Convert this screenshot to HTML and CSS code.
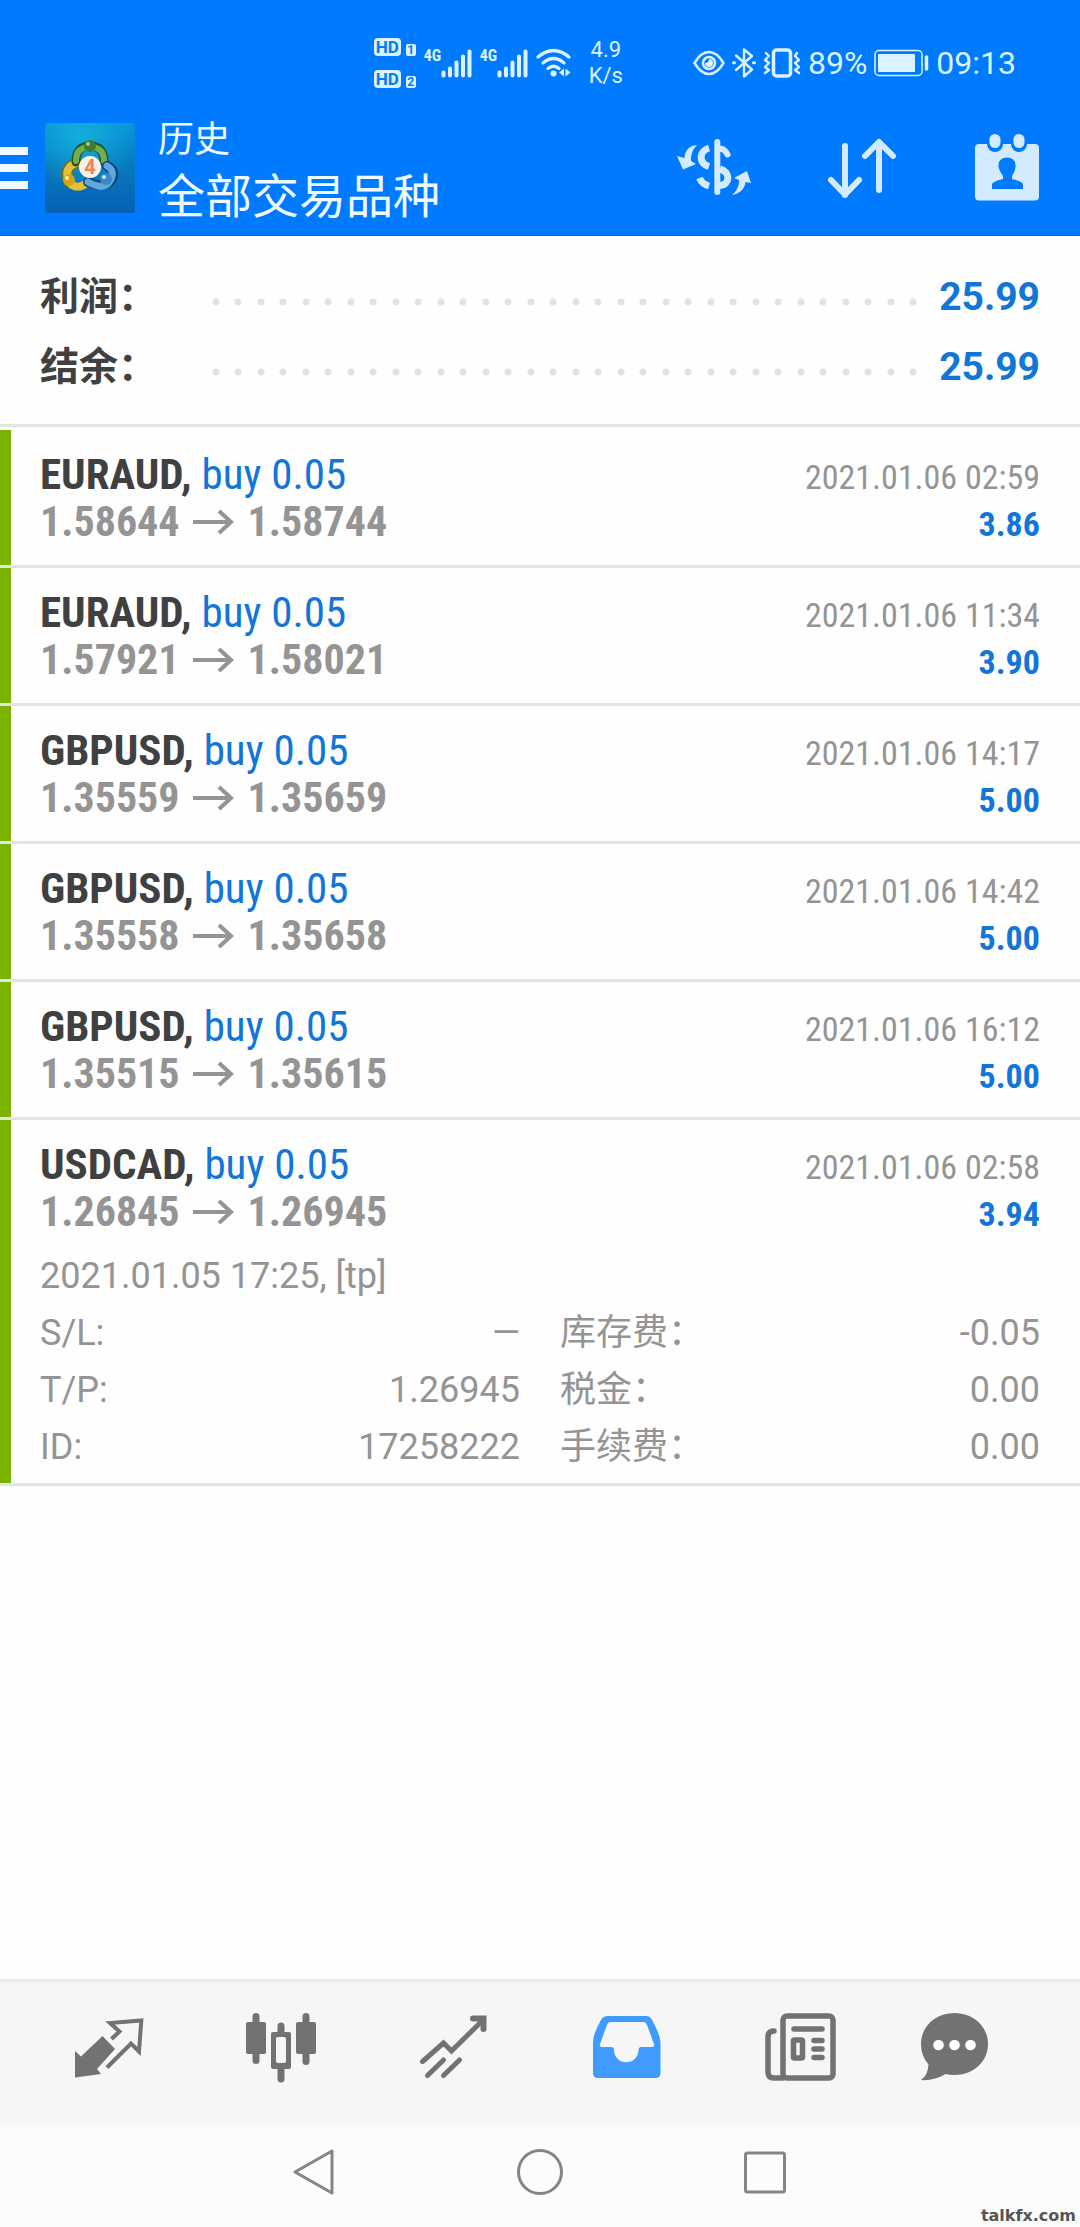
FILE: index.html
```html
<!DOCTYPE html>
<html lang="zh-CN">
<head>
<meta charset="utf-8">
<meta name="viewport" content="width=device-width, initial-scale=1">
<title>历史 - 全部交易品种</title>
<link rel="stylesheet" href="styles.css">
</head>
<body>
<header class="top">
  <div class="status">
    <div class="status-group status-network">
      <div class="hd-list">
        <div class="hd"><span class="hd-badge">HD</span><span class="hd-sim">1</span></div>
        <div class="hd"><span class="hd-badge">HD</span><span class="hd-sim">2</span></div>
      </div>
      <div class="signal">
        <span class="signal-type">4G</span>
        <svg width="31" height="29" viewBox="0 0 31 29" aria-hidden="true"><path d="M2.5 26.5v-3M9 26.500v-7M15.500 26.500v-13M22 26.500v-19M28.500 26.500v-24" stroke="currentColor" stroke-width="4" stroke-linecap="round"/></svg>
      </div>
      <div class="signal">
        <span class="signal-type">4G</span>
        <svg width="31" height="29" viewBox="0 0 31 29" aria-hidden="true"><path d="M2.5 26.5v-3M9 26.500v-7M15.500 26.500v-13M22 26.500v-19M28.500 26.500v-24" stroke="currentColor" stroke-width="4" stroke-linecap="round"/></svg>
      </div>
      <svg class="wifi" width="35" height="30" viewBox="0 0 35 30" fill="none" stroke="currentColor" stroke-width="3.200" stroke-linecap="round" aria-hidden="true"><path d="M2 9Q17.500-4 33 9M7 15Q17.500 6 28 15M12 20.500Q17.500 16 23 20.500"/><circle cx="17.500" cy="25.500" r="3" fill="currentColor" stroke="none"/><path d="M28 20.500v8l-5-4zM29.500 20.500v8l5-4z" fill="currentColor" stroke="none"/></svg>
      <div class="speed"><span>4.9</span><span>K/s</span></div>
    </div>
    <div class="status-group status-device">
      <svg width="32" height="26" viewBox="0 0 32 26" fill="none" stroke="currentColor" stroke-width="2.500" aria-hidden="true"><path d="M1.500 13Q8 2 16 2t14.500 11Q24 24 16 24T1.500 13z"/><circle cx="16" cy="13" r="6"/><path d="M16 9a4 4 0 1 1-4 4q4 0 4-4z" fill="currentColor" stroke="none"/></svg>
      <svg width="24" height="30" viewBox="0 0 24 30" fill="none" stroke="currentColor" stroke-width="2.400" stroke-linejoin="round" stroke-linecap="round" aria-hidden="true"><path d="M4 7.500 20 21.500 12 28.500V1.500L20 8 4 22"/><path d="M1.500 14.800h1M21.500 14.800h1" stroke-width="3"/></svg>
      <svg width="38" height="30" viewBox="0 0 38 30" fill="none" stroke="currentColor" stroke-linecap="round" stroke-linejoin="round" aria-hidden="true"><rect x="10.500" y="2" width="17" height="26" rx="3" stroke-width="3.500"/><path d="M3 5l3 3-4 4 4 3-4 4 4 3-4 3M34 5l-2 3 4 4-4 3 4 4-4 3 4 3" stroke-width="2.400"/></svg>
      <span class="status-text">89%</span>
      <svg width="55" height="28" viewBox="0 0 55 28" fill="none" aria-hidden="true"><rect x="1" y="1.500" width="47" height="25" rx="4" stroke="currentColor" stroke-width="1.500"/><rect x="4" y="5" width="37" height="18" rx="1" fill="currentColor"/><path d="M52.500 8v12" stroke="currentColor" stroke-width="3.500" stroke-linecap="round"/></svg>
      <span class="status-text">09:13</span>
    </div>
  </div>
  <div class="appbar">
    <button class="menu" type="button" aria-label="菜单"><i></i><i></i><i></i></button>
    <svg class="logo" width="90" height="90" viewBox="0 0 90 90" aria-hidden="true">
      <defs>
        <linearGradient id="sky" x1="0" y1="0" x2="0" y2="1"><stop offset="0" stop-color="#0a94dc"/><stop offset=".5" stop-color="#0878bd"/><stop offset="1" stop-color="#0560b4"/></linearGradient>
        <radialGradient id="shine" cx=".4" cy=".15" r=".6"><stop offset="0" stop-color="#16b6dc" stop-opacity=".8"/><stop offset="1" stop-color="#16b6dc" stop-opacity="0"/></radialGradient>
      </defs>
      <rect width="90" height="90" rx="3" fill="url(#sky)"/>
      <rect width="90" height="90" rx="3" fill="url(#shine)"/>
      <g fill="none" stroke-linecap="round">
        <path d="M24 59Q18 44 32 40" stroke="#7a6c18" stroke-width="11"/>
        <path d="M24 59Q18 44 32 40M27 62Q34 66 40 61" stroke="#e5bf35" stroke-width="8"/>
        <path d="M31 39Q31 23 45 23T59 39" stroke="#1f5529" stroke-width="9"/>
        <path d="M31 38Q31 24 45 24T59 38" stroke="#73ad52" stroke-width="6"/>
        <path d="M62 43Q72 48 66 57T43 59" stroke="#123f77" stroke-width="10"/>
        <path d="M62 43Q71 48 65 58T43 59" stroke="#5fa8dc" stroke-width="7"/>
      </g>
      <circle cx="45" cy="23" r="6" fill="#3c7c33"/><circle cx="43" cy="21" r="2" fill="#a2d27d"/>
      <circle cx="24" cy="57" r="6" fill="#d4a51c"/><circle cx="22" cy="55" r="2" fill="#fff0a0"/>
      <circle cx="61" cy="56" r="6" fill="#3b87cb"/><circle cx="59" cy="54" r="2" fill="#c4e8ff"/>
      <circle cx="45" cy="44" r="11" fill="#f6f1ea"/>
      <text x="45" y="51" text-anchor="middle" class="logo-digit">4</text>
    </svg>
    <div class="titles">
      <h1 class="title">历史</h1>
      <p class="subtitle">全部交易品种</p>
    </div>
    <div class="actions">
      <button type="button" aria-label="货币">
        <svg width="74" height="60" viewBox="0 0 74 60" fill="none" stroke="currentColor" stroke-width="6" aria-hidden="true"><path d="M40.300 4v50M43 10.500Q48 11 50.500 16.500" stroke-linecap="round"/><path d="M32 10C22 13 21 25 32 28.500M43 31C54 34 53 47 43 47.500" stroke-width="7"/><path d="M22.500 40Q25 46 32 48" stroke-width="7"/><path d="M20 7C12 8 8 12 7.500 20L0 18l6 13.500L19 26l-5-3c0-6 1-11 6-16zM55 57c7-1 13-6 13.500-13l5.500 1-4-12-13 7 5 2c0 6-2 11-7 15z" fill="currentColor" stroke="none"/></svg>
      </button>
      <button type="button" aria-label="排序">
        <svg width="68" height="62" viewBox="0 0 68 62" fill="none" stroke="currentColor" stroke-width="6" stroke-linecap="round" stroke-linejoin="round" aria-hidden="true"><path d="M16 9v49M2 43l14 14.500L30 43M50 53V5M36 19 50 5l14 14"/></svg>
      </button>
      <button type="button" aria-label="日期">
        <svg width="64" height="68" viewBox="0 0 64 68" aria-hidden="true"><path fill="currentColor" fill-rule="evenodd" d="M4 10h8a8 8 0 0 0 16 0h8a8 8 0 0 0 16 0h8a4 4 0 0 1 4 4v48.500a4 4 0 0 1-4 4H4a4 4 0 0 1-4-4V14a4 4 0 0 1 4-4zM17 55h31v-5q-2-3-11-5v-3q4-6 3.500-11Q40 23.500 32 23.500T23.500 31q0 5 4.500 11v3q-9 2-11 5z"/><rect x="14.500" y="0" width="11" height="14" rx="5.500" fill="currentColor"/><rect x="38.500" y="0" width="11" height="14" rx="5.500" fill="currentColor"/></svg>
      </button>
    </div>
  </div>
</header>

<main class="content">
  <dl class="summary">
    <div class="summary-row"><dt>利润：</dt><dd>25.99</dd></div>
    <div class="summary-row"><dt>结余：</dt><dd>25.99</dd></div>
  </dl>

  <ul class="deals">
    <li class="deal">
      <div class="deal-line"><h2 class="symbol">EURAUD, <span class="side">buy 0.05</span></h2><time class="time">2021.01.06 02:59</time></div>
      <div class="deal-line"><p class="prices"><span>1.58644</span><svg class="arrow" viewBox="0 0 42 24" aria-hidden="true"><path d="M0 12h38M26 1l12 11-12 11"/></svg><span>1.58744</span></p><strong class="profit">3.86</strong></div>
    </li>
    <li class="deal">
      <div class="deal-line"><h2 class="symbol">EURAUD, <span class="side">buy 0.05</span></h2><time class="time">2021.01.06 11:34</time></div>
      <div class="deal-line"><p class="prices"><span>1.57921</span><svg class="arrow" viewBox="0 0 42 24" aria-hidden="true"><path d="M0 12h38M26 1l12 11-12 11"/></svg><span>1.58021</span></p><strong class="profit">3.90</strong></div>
    </li>
    <li class="deal">
      <div class="deal-line"><h2 class="symbol">GBPUSD, <span class="side">buy 0.05</span></h2><time class="time">2021.01.06 14:17</time></div>
      <div class="deal-line"><p class="prices"><span>1.35559</span><svg class="arrow" viewBox="0 0 42 24" aria-hidden="true"><path d="M0 12h38M26 1l12 11-12 11"/></svg><span>1.35659</span></p><strong class="profit">5.00</strong></div>
    </li>
    <li class="deal">
      <div class="deal-line"><h2 class="symbol">GBPUSD, <span class="side">buy 0.05</span></h2><time class="time">2021.01.06 14:42</time></div>
      <div class="deal-line"><p class="prices"><span>1.35558</span><svg class="arrow" viewBox="0 0 42 24" aria-hidden="true"><path d="M0 12h38M26 1l12 11-12 11"/></svg><span>1.35658</span></p><strong class="profit">5.00</strong></div>
    </li>
    <li class="deal">
      <div class="deal-line"><h2 class="symbol">GBPUSD, <span class="side">buy 0.05</span></h2><time class="time">2021.01.06 16:12</time></div>
      <div class="deal-line"><p class="prices"><span>1.35515</span><svg class="arrow" viewBox="0 0 42 24" aria-hidden="true"><path d="M0 12h38M26 1l12 11-12 11"/></svg><span>1.35615</span></p><strong class="profit">5.00</strong></div>
    </li>
    <li class="deal deal-open">
      <div class="deal-line"><h2 class="symbol">USDCAD, <span class="side">buy 0.05</span></h2><time class="time">2021.01.06 02:58</time></div>
      <div class="deal-line"><p class="prices"><span>1.26845</span><svg class="arrow" viewBox="0 0 42 24" aria-hidden="true"><path d="M0 12h38M26 1l12 11-12 11"/></svg><span>1.26945</span></p><strong class="profit">3.94</strong></div>
      <div class="details">
        <p>2021.01.05 17:25, [tp]</p>
        <dl class="fields">
          <div><dt>S/L:</dt><dd>—</dd></div>
          <div><dt>库存费：</dt><dd>-0.05</dd></div>
          <div><dt>T/P:</dt><dd>1.26945</dd></div>
          <div><dt>税金：</dt><dd>0.00</dd></div>
          <div><dt>ID:</dt><dd>17258222</dd></div>
          <div><dt>手续费：</dt><dd>0.00</dd></div>
        </dl>
      </div>
    </li>
  </ul>
</main>

<nav class="tabs">
  <a href="#quotes" aria-label="行情"><svg viewBox="0 0 72 72" aria-hidden="true"><path d="M1 37v26.500L27 60l-4-5 18-20-12.500-13L7 42.500z" fill="currentColor"/><path d="M33 53.500 57 29.500l8 8L67.300 6.500 36 9l9.500 8.500-8 7.500" fill="none" stroke="currentColor" stroke-width="4"/></svg></a>
  <a href="#charts" aria-label="图表"><svg viewBox="0 0 72 72" fill="currentColor" aria-hidden="true"><rect x="0" y="8" width="20" height="32" rx="2"/><rect x="6.500" y="-1" width="7" height="51" rx="3.500"/><path fill-rule="evenodd" d="M27 18h16a2 2 0 0 1 2 2v33a2 2 0 0 1-2 2H27a2 2 0 0 1-2-2V20a2 2 0 0 1 2-2zm5 5a2 2 0 0 0-2 2v22a2 2 0 0 0 2 2h6a2 2 0 0 0 2-2V25a2 2 0 0 0-2-2z"/><path d="M31.500 19v-7a3.500 3.500 0 0 1 7 0v7zM31.500 54v11a3.500 3.500 0 0 0 7 0V54z"/><rect x="50" y="8" width="20" height="32" rx="2"/><rect x="56.500" y="-1" width="7" height="52" rx="3.500"/></svg></a>
  <a href="#trade" aria-label="交易"><svg viewBox="0 0 72 72" fill="none" stroke="currentColor" stroke-width="5" stroke-linecap="round" aria-hidden="true"><path d="M4.500 47.500 25.500 29l8 8L65 6"/><path d="M55 4.500h10.500V15" stroke-width="6"/><path d="M9.500 61.500 25.500 46M25.500 61.500 41.500 46"/></svg></a>
  <a class="active" href="#history" aria-label="历史" aria-current="page"><svg viewBox="0 0 72 72" fill="currentColor" aria-hidden="true"><path fill-rule="evenodd" d="M18 2h38q4 0 6 4 8 14 8.500 22v31q0 5-5 5H8q-5 0-5-5V28Q3 20 11 6q2-4 7-4zm3 6q-3 0-4 3L10 30q-1 3 2 3h9q3 0 3 3a12 12 0 0 0 24.500 0q0-3 3-3H62q3 0 2-3l-7-19q-1-3-4-3z"/></svg></a>
  <a href="#news" aria-label="新闻"><svg viewBox="0 0 72 72" fill="none" stroke="currentColor" stroke-width="5.500" stroke-linecap="round" aria-hidden="true"><rect x="21" y="2" width="50" height="62" rx="4"/><path d="M12 17q-6 0-6 6v35q0 6 6 6h9" /><path d="M32 15h28M52 26.500h8M52 35h8M52 43.500h8"/><rect x="31.500" y="26" width="9" height="18" rx="1"/></svg></a>
  <a href="#chat" aria-label="聊天"><svg viewBox="0 0 72 72" aria-hidden="true"><path fill="currentColor" d="M20.500-1C39-1 54 12 54 30S39 61 20.500 61q-5 0-9-1Q0 67-13 66q7-5 7.500-15.500Q-13 42-13 30C-13 12 2-1 20.500-1z"/><g fill="#fff"><circle cx="4.500" cy="31" r="5.300"/><circle cx="20.500" cy="31" r="5.300"/><circle cx="36.500" cy="31" r="5.300"/></g></svg></a>
</nav>

<footer class="system">
  <div class="system-keys">
    <button type="button" aria-label="返回"><svg viewBox="0 0 48 48" aria-hidden="true"><path d="M41 3v42L4 24z"/></svg></button>
    <button type="button" aria-label="主屏幕"><svg viewBox="0 0 48 48" aria-hidden="true"><circle cx="24" cy="24" r="21.500"/></svg></button>
    <button type="button" aria-label="最近任务"><svg viewBox="0 0 48 48" aria-hidden="true"><rect x="4.500" y="5" width="39" height="39" rx="2"/></svg></button>
  </div>
  <span class="watermark">talkfx.com</span>
</footer>
</body>
</html>
```

FILE: styles.css
```css
* {
  box-sizing: border-box;
}

:root {
  --blue: #007aff;
  --ice: #d4ebff;
  --value: #1275d8;
  --ink: #404040;
  --muted: #949494;
  --line: #e3e5e5;
  --cond: "Roboto Condensed", "Liberation Sans Narrow", Roboto, "Noto Sans CJK SC", sans-serif;
}

body {
  display: flex;
  flex-direction: column;
  min-height: 100vh;
  margin: 0;
  background: #fefefe;
  color: var(--muted);
  font-family: Roboto, "Noto Sans CJK SC", sans-serif;
  font-size: 36px;
}

h1, h2, p, dl, dd, ul {
  margin: 0;
  padding: 0;
  font-weight: 400;
}

ul {
  list-style: none;
}

button {
  display: flex;
  padding: 0;
  border: 0;
  background: none;
  color: inherit;
  font: inherit;
}

svg {
  display: block;
  flex: none;
  overflow: visible;
}

/* Blue header: status bar and app bar */

.top {
  background: var(--blue);
  border-bottom: 1px solid #1565b5;
  color: #dcf3ff;
}

.status {
  display: flex;
  justify-content: flex-end;
  gap: 70px;
  height: 106px;
  padding: 20px 64px 0 0;
}

.status-group {
  display: flex;
  align-items: center;
}

.status-network {
  gap: 8px;
}

.status-device {
  gap: 7px;
}

.hd-list {
  display: grid;
  gap: 14px;
}

.hd {
  display: flex;
  align-items: flex-end;
  gap: 5px;
  color: var(--blue);
  font-weight: 700;
}

.hd-badge,
.hd-sim {
  border-radius: 4px;
  background: #dcf3ff;
  text-align: center;
}

.hd-badge {
  width: 27px;
  font-size: 17px;
  line-height: 18px;
}

.hd-sim {
  width: 10px;
  border-radius: 2px;
  font-size: 12px;
  line-height: 12px;
}

.signal {
  display: flex;
  align-items: flex-start;
}

.signal-type {
  width: 17px;
  font-family: var(--cond);
  font-size: 16px;
  font-weight: 700;
  line-height: 14px;
}

.speed {
  display: grid;
  margin-left: 10px;
  font-size: 22px;
  line-height: 26px;
  text-align: center;
}

.status-text {
  font-size: 32px;
  line-height: 40px;
}

.appbar {
  display: flex;
  align-items: center;
  height: 129px;
  padding: 0 41px 6px 0;
}

.menu {
  flex-direction: column;
  gap: 9px;
  width: 28px;
  margin-right: 17px;
}

.menu i {
  height: 8px;
  background: #eefaff;
}

.logo {
  margin-right: 23px;
}

.logo-digit {
  fill: #ef8250;
  font-size: 20px;
  font-weight: 700;
}

.titles {
  flex: 1;
  padding-bottom: 8px;
  color: #f0fbff;
  font-family: "Noto Sans CJK SC", sans-serif;
}

.title {
  font-size: 36px;
  line-height: 58px;
}

.subtitle {
  font-size: 47px;
  line-height: 56px;
}

.actions {
  display: flex;
  align-items: center;
  gap: 78px;
  color: var(--ice);
}

/* Totals */

.summary {
  margin-bottom: 3px;
  padding: 26px 40px 22px;
  border-bottom: 3px solid var(--line);
  font-size: 39px;
  font-weight: 700;
  line-height: 70px;
}

.summary-row {
  display: grid;
  grid-template-columns: 165px 1fr auto;
  align-items: center;
}

.summary-row::before {
  grid-column: 2;
  grid-row: 1;
  height: 8px;
  margin: 10px 14px 0 0;
  background:
    radial-gradient(circle at 11px 4px, #e2e2e2 3px, transparent 4px),
    radial-gradient(circle at 33px 4px, #e2e2e2 3px, transparent 4px);
  background-size: 45px 8px;
  content: "";
}

.summary dt {
  grid-row: 1;
  color: var(--ink);
}

.summary dd {
  grid-column: 3;
  color: var(--value);
  font-weight: 700;
}

/* Deal list */

.deal {
  padding: 20px 40px 19px;
  border-bottom: 3px solid var(--line);
  background: linear-gradient(#7cb200, #7cb200) left / 11px 100% no-repeat;
  font-family: var(--cond);
}

.deal-open {
  padding-bottom: 7px;
}

.deal-line {
  display: flex;
  align-items: baseline;
  justify-content: space-between;
  height: 48px;
  line-height: 48px;
}

.symbol {
  color: var(--ink);
  font-size: 43px;
  font-weight: 700;
}

.side {
  color: var(--value);
  font-weight: 400;
}

.prices {
  display: flex;
  align-items: center;
  gap: 13px;
  font-size: 42px;
  font-weight: 700;
}

.arrow {
  width: 42px;
  height: 24px;
  fill: none;
  stroke: currentColor;
  stroke-width: 4px;
}

.time {
  font-size: 34px;
}

.profit {
  color: var(--value);
  font-size: 34px;
}

.details {
  margin-top: 12px;
  font-family: Roboto, "Noto Sans CJK SC", sans-serif;
  line-height: 57px;
}

.fields {
  display: grid;
  grid-template-columns: 1fr 1fr;
  column-gap: 40px;
}

.fields div {
  display: flex;
  justify-content: space-between;
  height: 57px;
}

/* Bottom tabs */

.content {
  flex: 1;
}

.tabs {
  display: flex;
  height: 139px;
  padding: 0 24px;
  border-top: 3px solid #ebebeb;
  background: #f6f6f6;
  color: #727272;
}

.tabs a {
  display: flex;
  flex: 1;
  align-items: center;
  justify-content: center;
  color: inherit;
}

.tabs svg {
  width: 72px;
  height: 72px;
}

.tabs .active {
  color: #3f9bff;
}

/* System navigation */

.system {
  position: relative;
  height: 109px;
  background: linear-gradient(#f6f6f6, #fcfcfc 14px);
}

.system-keys {
  display: flex;
  justify-content: center;
  gap: 177px;
  padding-top: 30px;
}

.system svg {
  width: 48px;
  height: 48px;
  fill: none;
  stroke: #858585;
  stroke-width: 3px;
  stroke-linejoin: round;
}

.watermark {
  position: absolute;
  right: 4px;
  bottom: 2px;
  color: #555;
  font-family: "DejaVu Sans", sans-serif;
  font-size: 16px;
  font-weight: 700;
  line-height: 18px;
}
```
